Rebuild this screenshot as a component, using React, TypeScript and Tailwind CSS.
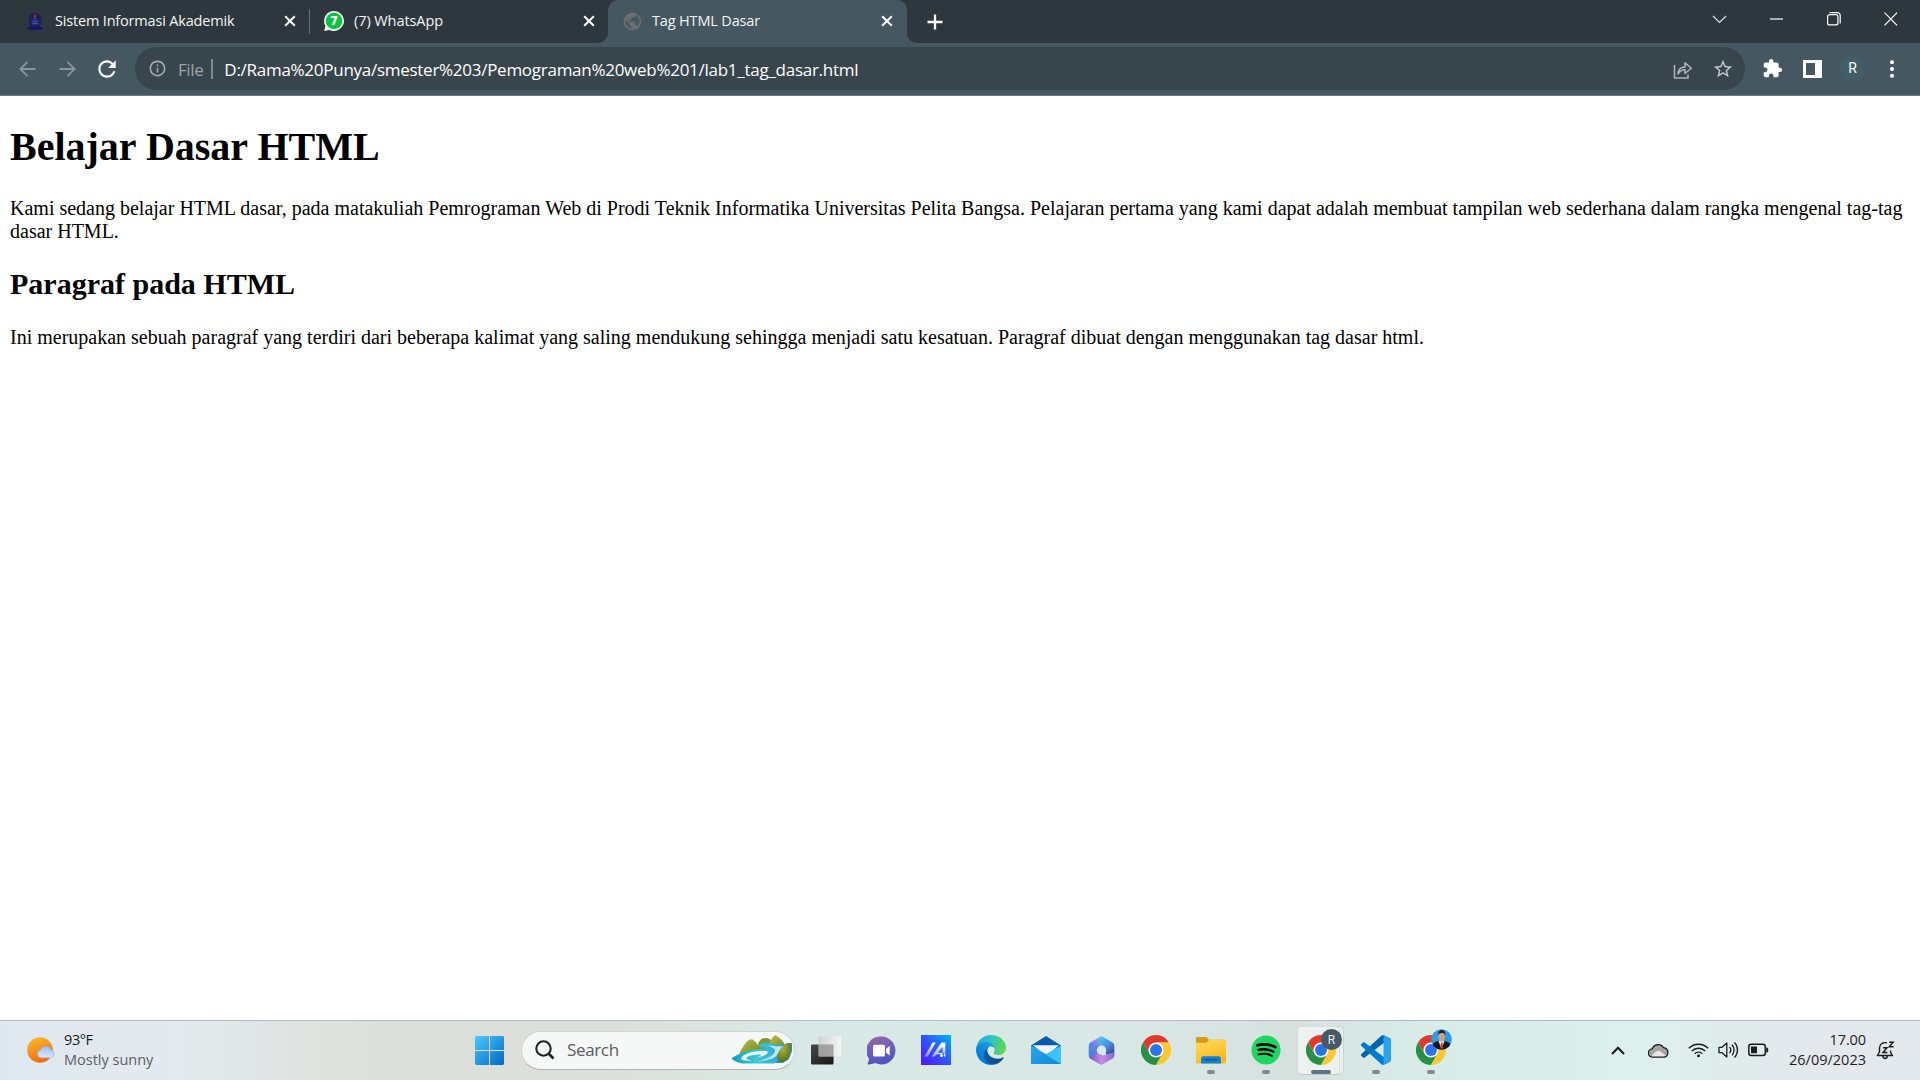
import React from "react";
import {
  MdExtension,
  MdInfoOutline,
  MdPublic,
  MdRefresh,
  MdStarBorder,
} from "react-icons/md";
import { FaSpotify } from "react-icons/fa";

/* ---------- Browser chrome ---------- */

function CloseGlyph() {
  return (
    <svg width="12" height="12" viewBox="0 0 12 12" fill="none" stroke="#fff" strokeWidth="2">
      <path d="M1.200 1.200 10.800 10.800M10.800 1.200 1.200 10.800" />
    </svg>
  );
}

function CampusIcon() {
  return (
    <svg width="18" height="18" viewBox="0 0 18 18">
      <path d="M9 1C4.500 1 2.500 4 2.500 8c0 3 .7 5 2 6.500h9c1.300-1.500 2-3.500 2-6.500 0-4-2-7-6.500-7z" fill="#1c2150" />
      <path d="M5.500 8 9 5.500 12.500 8v5h-7z" fill="#26307d" />
      <path d="M1.500 15.200h15v2.300h-15z" fill="#12106e" />
      <path d="M4 13.500h10v1.700H4z" fill="#1a1a66" />
      <path d="M9 2c1.300 1.700 1.300 3.300 0 4.500C7.700 5.300 7.700 3.700 9 2z" fill="#c22a2a" />
      <path d="M7.500 9.500h3M6.500 11.500h5" stroke="#5a64b8" strokeWidth=".7" />
    </svg>
  );
}

function WhatsAppIcon() {
  return (
    <span className="relative flex h-5 w-5 items-center justify-center">
      <svg className="absolute inset-0" width="20" height="20" viewBox="0 0 20 20">
        <path d="M10 0a10 10 0 1 1-4.600 18.900L.2 20l1.200-5A10 10 0 0 1 10 0z" fill="#f4f6f5" />
        <circle cx="10" cy="10" r="8.300" fill="#0dc143" />
      </svg>
      <span className="relative text-[12px] leading-none font-extrabold text-white">7</span>
    </span>
  );
}

function TabStrip() {
  return (
    <div className="flex h-[43px] items-stretch bg-[#2d373d] text-[14.5px] text-[#f3f5f6]">
      <div className="flex w-[309px] items-center pb-px pl-[26px]">
        <CampusIcon />
        <span className="ml-[11px] w-[229px] pb-px leading-5 tracking-[-0.18px]">Sistem Informasi Akademik</span>
        <CloseGlyph />
      </div>
      <div className="my-[9px] w-px bg-[#66727a]" />
      <div className="flex w-[298px] items-center pb-px pl-[14px]">
        <WhatsAppIcon />
        <span className="ml-[10px] w-[229px] pb-px leading-5 tracking-[-0.08px]">(7) WhatsApp</span>
        <CloseGlyph />
      </div>
      <div className="relative flex w-[299px] items-center rounded-t-[10px] bg-[#455760] pb-px pl-[14px]">
        <svg className="absolute bottom-0 -left-[10px]" width="10" height="10" viewBox="0 0 10 10">
          <path d="M10 0v10H0A10 10 0 0 0 10 0z" fill="#455760" />
        </svg>
        <svg className="absolute -right-[10px] bottom-0" width="10" height="10" viewBox="0 0 10 10">
          <path d="M0 0v10h10A10 10 0 0 1 0 0z" fill="#455760" />
        </svg>
        <MdPublic size={21} color="#6b6e71" />
        <span className="ml-[9px] w-[229px] pb-px leading-5 tracking-[-0.16px]">Tag HTML Dasar</span>
        <CloseGlyph />
      </div>
      <div className="flex items-center pl-5">
        <svg width="16" height="16" viewBox="0 0 16 16" stroke="#fff" strokeWidth="2.300">
          <path d="M8 .5v15M.5 8h15" />
        </svg>
      </div>
      <div className="ml-auto flex h-[37px] items-center">
        <svg className="w-[57px]" height="14" viewBox="0 0 57 14" fill="none" stroke="#dfe3e5" strokeWidth="1.200">
          <path d="M22 4l6.500 6.500L35 4" />
        </svg>
        <svg className="w-[57px]" height="14" viewBox="0 0 57 14" stroke="#fff" strokeWidth="1.200">
          <path d="M22 7h13" />
        </svg>
        <svg className="w-[57px]" height="14" viewBox="0 0 57 14" fill="none" stroke="#fff" strokeWidth="1.200">
          <rect x="22.600" y="2.600" width="10.300" height="10.300" rx="2" />
          <path d="M24.500 .7h8a2.700 2.700 0 0 1 2.700 2.700v8" />
        </svg>
        <svg className="w-[58px]" height="14" viewBox="0 0 58 14" stroke="#fff" strokeWidth="1.200">
          <path d="M22.500.7l12.600 12.600M35.100.7 22.500 13.300" />
        </svg>
      </div>
    </div>
  );
}

function Toolbar() {
  return (
    <div className="flex h-[53px] items-center border-b border-[#6a7983] bg-[#455760] pb-px text-[17px]">
      <div className="flex w-[135px] items-center pl-[19px]">
        <svg width="17" height="16" viewBox="0 0 17 16" fill="none" stroke="#89959b" strokeWidth="1.900">
          <path d="M16.500 8H1.500M8.500.9 1.400 8l7.100 7.100" />
        </svg>
        <svg className="ml-[23px]" width="17" height="16" viewBox="0 0 17 16" fill="none" stroke="#89959b" strokeWidth="1.900">
          <path d="M.5 8h15M8.500.9 15.600 8l-7.100 7.100" />
        </svg>
        <MdRefresh className="ml-[18px]" size={26} color="#fff" />
      </div>
      <div className="flex h-[43px] w-[1610px] items-center rounded-full bg-[#39454c] pl-[13px]">
        <MdInfoOutline size={19} color="#a3abb0" />
        <span className="ml-[11px] pt-[2px] tracking-[-0.4px] text-[#9ba3a8]">File</span>
        <span className="ml-[8px] h-5 w-[2px] bg-[#7e888e]" />
        <span className="ml-[11px] pt-[2px] tracking-[-0.27px] text-white">
          D:/Rama%20Punya/smester%203/Pemograman%20web%201/lab1_tag_dasar.html
        </span>
        <svg className="mt-[2px] ml-auto" width="20" height="18" viewBox="0 0 20 18" fill="none" stroke="#b0b5b8" strokeWidth="1.500">
          <path d="M1.500 4v13H15v-3.500" />
          <path d="M5 13c.4-4.600 3-7 7-7V1.800L18.300 7.200 12 12.500V8.800C9 8.800 6.800 10 5 13z" strokeLinejoin="round" />
        </svg>
        <MdStarBorder className="mt-px mr-[11px] ml-[19px]" size={22} color="#c3c7c9" />
      </div>
      <div className="flex items-center">
        <MdExtension className="ml-[17px]" size={21} color="#fff" />
        <svg className="ml-[20px]" width="19" height="18" viewBox="0 0 19 18">
          <path d="M0 0h19v18H0zM3 3v12h9V3z" fill="#fff" fillRule="evenodd" />
        </svg>
        <span className="ml-[17px] flex h-[27px] w-[27px] items-center justify-center rounded-full bg-[#425c68] font-[Roboto] text-[14px] text-white">
          R
        </span>
        <svg className="ml-[23px]" width="6" height="18" viewBox="0 0 6 18" fill="#fff">
          <circle cx="3" cy="2.300" r="2" />
          <circle cx="3" cy="9" r="2" />
          <circle cx="3" cy="15.700" r="2" />
        </svg>
      </div>
    </div>
  );
}

/* ---------- Page ---------- */

function PageContent() {
  return (
    <main className="flex-1 bg-white px-[10px] pt-[28px] font-['Liberation_Serif',serif] text-[20px] leading-[23px] text-black">
      <h1 className="text-[40px] leading-[46px] font-bold">Belajar Dasar HTML</h1>
      <p className="mt-[27px]">
        Kami sedang belajar HTML dasar, pada matakuliah Pemrograman Web di Prodi Teknik Informatika Universitas Pelita
        Bangsa. Pelajaran pertama yang kami dapat adalah membuat tampilan web sederhana dalam rangka mengenal tag-tag
        dasar HTML.
      </p>
      <h2 className="mt-[24px] text-[30px] leading-[34px] font-bold">Paragraf pada HTML</h2>
      <p className="mt-[25px]">
        Ini merupakan sebuah paragraf yang terdiri dari beberapa kalimat yang saling mendukung sehingga menjadi satu
        kesatuan. Paragraf dibuat dengan menggunakan tag dasar html.
      </p>
    </main>
  );
}

/* ---------- Taskbar ---------- */

function WeatherIcon() {
  return (
    <svg width="28" height="27" viewBox="0 0 28 27">
      <defs>
        <linearGradient id="sun" x1="0.200" y1="0" x2="0.600" y2="1">
          <stop offset="0" stopColor="#f7b92e" />
          <stop offset="1" stopColor="#f2680f" />
        </linearGradient>
        <linearGradient id="cloud" x1="0" y1="0" x2="0" y2="1">
          <stop offset="0" stopColor="#9dbdf2" />
          <stop offset="1" stopColor="#dbe7fb" />
        </linearGradient>
      </defs>
      <circle cx="13" cy="13" r="12.800" fill="url(#sun)" />
      <path d="M14 20.800a4 4 0 0 1-.3-7.900 5.300 5.300 0 0 1 10-.2 4.100 4.100 0 0 1-.2 8.100z" fill="url(#cloud)" stroke="#8fb0ea" strokeWidth=".6" />
    </svg>
  );
}

function WindowsIcon() {
  return (
    <svg width="29" height="29" viewBox="0 0 29 29">
      <defs>
        <linearGradient id="win" x1="0" y1="0" x2="1" y2="1">
          <stop offset="0" stopColor="#4cc9fb" />
          <stop offset="1" stopColor="#0067c9" />
        </linearGradient>
      </defs>
      <path d="M1 0h13v14H0V1zM15 0h13l1 1v13H15zM0 15h14v14H1l-1-1zM15 15h14v13l-1 1H15z" fill="url(#win)" />
    </svg>
  );
}

function RiverIcon() {
  return (
    <svg width="62" height="30" viewBox="0 0 62 30">
      <defs>
        <linearGradient id="hill" x1="0" y1="0" x2="1" y2="1">
          <stop offset="0" stopColor="#c0bb45" />
          <stop offset="0.500" stopColor="#93a336" />
          <stop offset="1" stopColor="#5f8424" />
        </linearGradient>
        <linearGradient id="river" x1="0" y1="0" x2="1" y2="0">
          <stop offset="0" stopColor="#0e9fc0" />
          <stop offset="0.450" stopColor="#3cc9cf" />
          <stop offset="1" stopColor="#2b9fe0" />
        </linearGradient>
        <radialGradient id="bush" cx="0.350" cy="0.250" r="0.800">
          <stop offset="0" stopColor="#b6b23c" />
          <stop offset="1" stopColor="#4f711c" />
        </radialGradient>
      </defs>
      <path d="M56 8h5v8l-3 8-6 4h-8z" fill="#1d93d2" />
      <path d="M26 13c1-6 4-10 8-10s6 2 8 4l4 6-6 5H27z" fill="#83962f" />
      <path d="M38 9c2-4 4-8 6.500-8.700C48 2 52 6 54 10l-5 7-10-3z" fill="url(#hill)" />
      <path d="M8 18.500C11 14 15 5 20 4.300c4 .3 7 6 9.500 10.200L21 20z" fill="url(#hill)" />
      <path d="M28 10c4-3.500 10-3 13-1 5 2.500 10-.5 14.500.5C52 13 49 15 49 19c0 4-1 7-6 9.500H12C7 28 2 25.500.5 23.500 5 20 14 15.500 25 14.500c4-.4 9 0 8.500-1.500-.4-1.300-5.500-.5-5.500-3z" fill="url(#river)" />
      <path d="M37 10.500c5-.5 8 1.500 15 .5-4 3-3 7-8 11-3 2-9 4-17 4.500 8-2.500 17-6 17-11 0-2-3-3-7-5z" fill="#b8e7f5" />
      <path d="M10 24c1-4.500 9-8 26-8 2.500 2.500-2 5-10 6.500 3-1.500 4-2.500 4-3.300-7 .2-15 1.800-14.500 4.300.3 1 3 1.500 5 2-5 .5-9.500 0-10.500-1.500z" fill="#e4f8fc" />
      <path d="M47 19c0-3 4-4 5-8 2-3 7-4 8-1 1 3-1 5-1 8 0 5-4 9-8 9s-6-4-4-8z" fill="url(#bush)" />
    </svg>
  );
}

function TaskViewIcon() {
  return (
    <svg width="30" height="29" viewBox="0 0 30 29">
      <defs>
        <linearGradient id="tvA" x1="0" y1="0" x2="1" y2="1">
          <stop offset="0" stopColor="#484848" />
          <stop offset="1" stopColor="#161616" />
        </linearGradient>
        <linearGradient id="tvB" x1="0" y1="0" x2="1" y2="0">
          <stop offset="0" stopColor="#cfcfcf" />
          <stop offset="1" stopColor="#f7f7f7" />
        </linearGradient>
      </defs>
      <rect y="8.500" width="22.500" height="20" rx="1" fill="url(#tvA)" />
      <rect x="7.500" y="0.500" width="22.500" height="20" rx="1" fill="url(#tvB)" opacity=".9" />
      <path d="M7.500 8.500h15v12h-15z" fill="#8d8d8d" opacity=".65" />
    </svg>
  );
}

function ChatIcon() {
  return (
    <svg width="29" height="29" viewBox="0 0 29 29">
      <defs>
        <linearGradient id="chat" x1="0" y1="0" x2="0.300" y2="1">
          <stop offset="0" stopColor="#a0679f" />
          <stop offset="0.450" stopColor="#7460b8" />
          <stop offset="1" stopColor="#5055c4" />
        </linearGradient>
      </defs>
      <path d="M14.500.5a14 14 0 1 1-6.200 26.600C6 28.200 3 28.700 1 28.500c-.6 0-.7-.6-.4-1 1-1.600 1.200-3.500 1.300-5A14 14 0 0 1 14.500.5z" fill="url(#chat)" />
      <rect x="6" y="8.800" width="12" height="11.800" rx="1.500" fill="#fff" />
      <path d="M19 13l3.700-3.200v9.800L19 16.400z" fill="#fff" />
    </svg>
  );
}

function MyAsusIcon() {
  return (
    <svg width="30" height="30" viewBox="0 0 30 30">
      <defs>
        <linearGradient id="asus" x1="0" y1="1" x2="1" y2="0">
          <stop offset="0" stopColor="#5b12fb" />
          <stop offset="0.500" stopColor="#2c55fb" />
          <stop offset="1" stopColor="#00b4fb" />
        </linearGradient>
        <linearGradient id="asusMark" x1="0" y1="1" x2="0.300" y2="0">
          <stop offset="0" stopColor="#7f8cff" />
          <stop offset="1" stopColor="#fff" />
        </linearGradient>
      </defs>
      <path d="M0 0h30v30H0z" fill="url(#asus)" />
      <path d="M3.500 21.500 11.500 7.500h3.300l-8 14zM10.500 21.500 20.500 7.500h3.800v11l-2.800-1v-5.500l-7.700 9.500z" fill="url(#asusMark)" />
      <path d="M14.500 18.500h7" stroke="#c9d4ff" strokeWidth="1.500" />
      <circle cx="20.500" cy="20.500" r="1.500" fill="#fff" />
      <path d="M22.800 18.500h1.500v3h-1.500z" fill="#dfe6ff" />
    </svg>
  );
}

function EdgeIcon() {
  return (
    <svg width="30" height="30" viewBox="0 0 256 256">
      <defs>
        <linearGradient id="edgeA" x1="0.200" y1="0.500" x2="1" y2="0.600">
          <stop offset="0" stopColor="#0c59a4" />
          <stop offset="1" stopColor="#114a8b" />
        </linearGradient>
        <linearGradient id="edgeB" x1="0.800" y1="0.100" x2="0.300" y2="1">
          <stop offset="0" stopColor="#1b9de2" />
          <stop offset="0.600" stopColor="#0883d8" />
          <stop offset="1" stopColor="#0078d4" />
        </linearGradient>
        <linearGradient id="edgeC" x1="0" y1="0.300" x2="1" y2="0.500">
          <stop offset="0" stopColor="#2aa8e0" />
          <stop offset="0.450" stopColor="#2fc2c8" />
          <stop offset="1" stopColor="#5fd94e" />
        </linearGradient>
      </defs>
      <g transform="translate(-4.63 -4.92)">
        <path d="M235.680 195.460a93.730 93.730 0 0 1-10.540 4.710 101.870 101.870 0 0 1-35.900 6.460c-47.320 0-88.540-32.550-88.540-74.320A31.480 31.480 0 0 1 117.130 105c-42.800 1.800-53.800 46.400-53.800 72.530 0 73.880 68.090 81.370 82.760 81.370 7.910 0 19.840-2.300 27-4.560l1.310-.44a128.340 128.340 0 0 0 66.600-52.800 4 4 0 0 0-5.320-5.640z" fill="url(#edgeA)" />
        <path d="M110.340 246.340A79.200 79.200 0 0 1 87.600 225a80.720 80.720 0 0 1 29.530-120c3.120-1.470 8.450-4.130 15.540-4a32.350 32.350 0 0 1 25.690 13 31.880 31.880 0 0 1 6.360 18.660c0-.21 24.460-79.600-80-79.600-43.900 0-80 41.660-80 78.210a130.150 130.150 0 0 0 12.110 56 128 128 0 0 0 156.380 67.110 75.550 75.550 0 0 1-62.780-8z" fill="url(#edgeB)" />
        <path d="M156.940 153.780c-.81 1.050-3.300 2.500-3.300 5.660 0 2.610 1.700 5.120 4.720 7.230 14.380 10 41.490 8.680 41.560 8.680a59.560 59.560 0 0 0 30.270-8.350A61.380 61.380 0 0 0 260.620 114c.26-22.410-8-37.310-11.340-43.910C228.090 28.760 182.350 5 132.620 5a128 128 0 0 0-128 126.200c.48-36.540 36.800-66.050 80-66.050 3.500 0 23.460.34 42 10.070 16.340 8.580 24.900 18.940 30.850 29.210 6.180 10.670 7.280 24.150 7.280 29.520s-2.740 13.330-7.810 19.830z" fill="url(#edgeC)" />
      </g>
    </svg>
  );
}

function MailIcon() {
  return (
    <svg width="30" height="28" viewBox="0 0 30 28">
      <defs>
        <linearGradient id="mail" x1="0" y1="0" x2="1" y2="1">
          <stop offset="0" stopColor="#2aa9ea" />
          <stop offset="1" stopColor="#1288d8" />
        </linearGradient>
      </defs>
      <path d="M0 9.500 15 0l15 9.500v5H0z" fill="#0a5ca8" />
      <path d="M2 9.200h26L15 20z" fill="#f4f4f8" />
      <path d="M0 9.500 15 18 30 9.500V28H0z" fill="#3bc4f5" />
      <path d="M0 9.500 30 28H0z" fill="url(#mail)" />
    </svg>
  );
}

function Office365Icon() {
  return (
    <svg width="27" height="29" viewBox="0 0 27 29">
      <defs>
        <clipPath id="offHex">
          <path d="M11.500 1.200q2-1.200 4 0l8.800 5Q26.300 7.400 26.300 9.700v9.600q0 2.300-2 3.500l-8.800 5q-2 1.200-4 0l-8.800-5q-2-1.200-2-3.500V9.700q0-2.300 2-3.500z" />
        </clipPath>
        <linearGradient id="offA" x1="0.600" y1="0" x2="0.300" y2="1">
          <stop offset="0" stopColor="#b18fe8" />
          <stop offset="0.400" stopColor="#5a86e0" />
          <stop offset="1" stopColor="#3a7be0" />
        </linearGradient>
        <linearGradient id="offB" x1="0.200" y1="0" x2="0.800" y2="1">
          <stop offset="0" stopColor="#45cdf5" />
          <stop offset="0.450" stopColor="#4a8be0" />
          <stop offset="1" stopColor="#2c2f7c" />
        </linearGradient>
        <linearGradient id="offC" x1="0" y1="0" x2="1" y2="0">
          <stop offset="0" stopColor="#6a4fb4" />
          <stop offset="0.500" stopColor="#c98ce6" />
          <stop offset="1" stopColor="#8468d0" />
        </linearGradient>
      </defs>
      <g clipPath="url(#offHex)">
        <path d="M0 0h14v29H0z" fill="url(#offA)" />
        <path d="M12 0h15v24l-9-5.500L17 11 9.500 7z" fill="url(#offB)" />
        <path d="M0 21.500 9.500 17l4 3L27 16v13H0z" fill="url(#offC)" />
      </g>
      <circle cx="13.500" cy="14.300" r="4.700" fill="#d9e9e5" />
    </svg>
  );
}

function ChromeIcon() {
  return (
    <svg width="30" height="30" viewBox="0 0 48 48">
      <circle cx="24" cy="24" r="12" fill="#fff" />
      <path d="M24 12h20.781A23.994 23.994 0 0 0 3.216 12.003L13.608 30l.009-.002A11.985 11.985 0 0 1 24 12z" fill="#e03a2f" />
      <path d="M13.609 30.003 3.218 12.006A23.994 23.994 0 0 0 24.003 48l10.390-17.997-.007-.007a11.985 11.985 0 0 1-20.777.007z" fill="#269045" />
      <path d="M34.391 30.003 24.001 48A23.994 23.994 0 0 0 44.780 12.003H23.999l-.003.010a11.985 11.985 0 0 1 10.395 17.990z" fill="#fcc934" />
      <circle cx="24" cy="24" r="9.500" fill="#2b73e8" />
    </svg>
  );
}

function FolderIcon() {
  return (
    <svg width="30" height="27" viewBox="0 0 30 27">
      <defs>
        <linearGradient id="fold" x1="0" y1="0" x2="0.500" y2="1">
          <stop offset="0" stopColor="#ffdb63" />
          <stop offset="1" stopColor="#fbb81a" />
        </linearGradient>
      </defs>
      <path d="M0 1.500C0 .7.700 0 1.500 0h9L13 2.700h15.500c.8 0 1.500.5 1.500 1.300v8H0z" fill="#dc9a12" />
      <path d="M0 5.800h10.500L13 3h16c.6 0 1 .4 1 1v21.500c0 .6-.4 1-1 1H1c-.6 0-1-.4-1-1z" fill="url(#fold)" />
      <path d="M5 26.500v-5c0-1.300 1-2.300 2.300-2.300h15.400c1.300 0 2.300 1 2.300 2.300v5z" fill="#1181d3" />
      <path d="M8.500 22.700h13" stroke="#0a5296" strokeWidth="1.300" />
    </svg>
  );
}

function SpotifyIcon() {
  return (
    <span className="flex h-[30px] w-[30px] items-center justify-center rounded-full bg-[radial-gradient(circle,#000_60%,transparent_61%)]">
      <FaSpotify size={30} color="#1ed760" />
    </span>
  );
}

function CodeIcon() {
  return (
    <svg width="30" height="30" viewBox="0 0 100 100">
      <path d="M96.460 10.800 75.860.870a6.230 6.230 0 0 0-7.110 1.210L1.300 63.580a4.170 4.170 0 0 0 0 6.170l5.510 5a4.170 4.170 0 0 0 5.320.24L93.360 13.380A4.140 4.140 0 0 1 100 16.670v-.24a6.250 6.250 0 0 0-3.540-5.630z" fill="#0065a9" />
      <path transform="translate(0 100) scale(1 -1)" d="M96.460 10.800 75.860.870a6.230 6.230 0 0 0-7.110 1.210L1.300 63.580a4.170 4.170 0 0 0 0 6.170l5.510 5a4.170 4.170 0 0 0 5.320.24L93.360 13.380A4.140 4.140 0 0 1 100 16.670v-.24a6.250 6.250 0 0 0-3.540-5.630z" fill="#007acc" />
      <path d="M75.860 99.130a6.230 6.230 0 0 1-7.110-1.210A3.660 3.660 0 0 0 75 95.330V4.670a3.660 3.660 0 0 0-6.250-2.590A6.230 6.230 0 0 1 75.860.870l20.600 9.900A6.250 6.250 0 0 1 100 16.400v67.200a6.250 6.250 0 0 1-3.540 5.630z" fill="#28a2ee" />
    </svg>
  );
}

function PortraitBadge() {
  return (
    <svg className="absolute -top-[6px] left-[15px]" width="21" height="21" viewBox="0 0 21 21">
      <defs>
        <clipPath id="face">
          <circle cx="10.500" cy="10.500" r="10.300" />
        </clipPath>
      </defs>
      <g clipPath="url(#face)">
        <path d="M0 0h21v21H0z" fill="#2d9be0" />
        <path d="M0 21c0-6 3-8 7-9h7c4 1 7 3 7 9z" fill="#15171c" />
        <path d="M7.500 12h6l-3 8z" fill="#f0ece8" />
        <path d="M10 13.500h1.300l.8 5-1.500 2-1.300-2z" fill="#c23a28" />
        <ellipse cx="10.600" cy="7.800" rx="3.300" ry="5" fill="#caa38b" />
        <path d="M7.100 6.500C7 2.500 8.500 1 10.700 1s3.900 1.500 3.600 5.300c-.8-2-1.500-2.400-3.600-2.400s-2.900.6-3.600 2.600z" fill="#252021" />
      </g>
    </svg>
  );
}

function Slot({ children, mark }: { children: React.ReactNode; mark?: "dot" | "bar" }) {
  return (
    <div className="relative flex h-[58px] w-[55px] items-center justify-center">
      {mark === "bar" && (
        <>
          <span className="absolute top-[5px] left-[8px] h-[49px] w-[42px] rounded-[5px] border border-[#c9d0ce] bg-[#e9f0ee]" />
          <span className="absolute top-[5px] left-[3px] h-[49px] w-[43px] rounded-[5px] border border-[#d5dcda] border-b-[#bfc6c4] bg-[#edf2f0]" />
        </>
      )}
      <div className="relative">{children}</div>
      {mark === "dot" && <span className="absolute top-[49px] left-[23.500px] h-1 w-2 rounded-full bg-[#82898a]" />}
      {mark === "bar" && <span className="absolute top-[49px] left-[17.500px] h-1 w-5 rounded-full bg-[#5f7488]" />}
    </div>
  );
}

function Tray() {
  return (
    <div className="ml-auto flex items-center">
      <svg width="14" height="9" viewBox="0 0 14 9" fill="none" stroke="#1c1c1c" strokeWidth="2">
        <path d="M1 8l6-6.300L13 8" />
      </svg>
      <svg className="ml-[23px]" width="21" height="15" viewBox="0 0 21 15">
        <path d="M5 14.200a4.200 4.200 0 0 1-.7-8.400 6.300 6.300 0 0 1 11.200-1.200 4.900 4.900 0 0 1 .7 9.600z" fill="#a5a5a5" />
        <path d="M3.500 14 C5 10 8 8 11 7.500L18.500 13c-.8.800-1.500 1.200-2.500 1.200z" fill="#e8e8e8" />
        <path d="M5 14.200a4.200 4.200 0 0 1-.7-8.400 6.300 6.300 0 0 1 11.200-1.200 4.900 4.900 0 0 1 .7 9.600z" fill="none" stroke="#222" strokeWidth="1.300" />
      </svg>
      <svg className="ml-[19px]" width="21" height="16" viewBox="0 0 21 16" fill="none" stroke="#1c1c1c" strokeWidth="1.400">
        <path d="M.8 6.300a13.700 13.700 0 0 1 19.400 0M3.800 9a9.500 9.500 0 0 1 13.400 0M6.700 11.700a5.400 5.400 0 0 1 7.600 0" />
        <circle cx="10.500" cy="13.700" r="1.500" fill="#1c1c1c" stroke="none" />
      </svg>
      <svg className="ml-[9px]" width="21" height="18" viewBox="0 0 21 18" fill="none" stroke="#1c1c1c" strokeWidth="1.300">
        <path d="M1 6.300h3L8.800 2v14L4 11.700H1z" strokeLinejoin="round" />
        <path d="M11.500 6a4.500 4.500 0 0 1 0 6M14 3.700a8 8 0 0 1 0 10.600M16.500 1.400a11.200 11.200 0 0 1 0 15.200" />
      </svg>
      <svg className="ml-[9px]" width="21" height="14" viewBox="0 0 21 14">
        <rect x=".8" y="1.300" width="16.500" height="11.200" rx="2.500" fill="none" stroke="#1c1c1c" strokeWidth="1.500" />
        <path d="M3 3.600h6v6.600H3zM18.200 4.500h1l1 1.200v2.600l-1 1.200h-1z" fill="#1c1c1c" />
      </svg>
      <div className="ml-[10px] w-[87px] pb-px text-right text-[14.5px] leading-5 text-[#1f1f1f]">
        <div className="tracking-[-0.1px]">17.00</div>
        <div>26/09/2023</div>
      </div>
      <svg className="mr-[25px] ml-[10px]" width="19" height="19" viewBox="0 0 19 19" fill="none" stroke="#1c1c1c" strokeWidth="1.400">
        <path d="M11 1.900C6.500.8 3.500 3.500 3.500 7v4L1.300 14.500h15.200L14.600 11.500V9.500" strokeLinejoin="round" />
        <path d="M6.700 15c.4 1.600 1.300 2.500 2.400 2.500s2-.9 2.400-2.500M7 6.800h4l-4 4.700h4.300M13.200 1.200h4l-4 4.500h4.300" />
      </svg>
    </div>
  );
}

function Taskbar() {
  return (
    <footer className="flex h-[60px] items-center border-t border-[#b3b9bc] bg-[linear-gradient(90deg,#dfe7f0_0px,#e3ebee_180px,#dfe3e1_300px,#dbdfd9_420px,#dcdfda_600px,#d9e9e5_800px,#d9e8e5_1150px,#d6e1de_1290px,#d9ebe7_1400px,#ddf0ed_1640px,#e3e9ec_1800px,#e2e8ec_1920px)] pb-px">
      <div className="flex w-[475px] items-center pl-[27px]">
        <WeatherIcon />
        <div className="ml-[9px] pb-px text-[14.5px] leading-5">
          <div className="tracking-[-0.4px] text-[#1b1b1b]">93°F</div>
          <div className="text-[#5b6062]">Mostly sunny</div>
        </div>
      </div>
      <WindowsIcon />
      <div className="ml-[17px] flex h-[39px] w-[274px] items-center rounded-full border border-[#cfd5d3] border-b-[#aeb5b2] bg-[#f6f8f7] pl-[13px]">
        <svg width="20" height="20" viewBox="0 0 20 20" fill="none" stroke="#222" strokeWidth="2.100">
          <circle cx="8.500" cy="8.500" r="7.200" />
          <path d="M13.500 13.500l5 5" strokeWidth="2.600" />
        </svg>
        <span className="ml-[12px] text-[17px] tracking-[-0.35px] text-[#5c5c5c]">Search</span>
        <span className="mr-[1px] ml-auto">
          <RiverIcon />
        </span>
      </div>
      <div className="ml-[3.500px] flex">
        <Slot><TaskViewIcon /></Slot>
        <Slot><ChatIcon /></Slot>
        <Slot><MyAsusIcon /></Slot>
        <Slot><EdgeIcon /></Slot>
        <Slot><MailIcon /></Slot>
        <Slot><Office365Icon /></Slot>
        <Slot><ChromeIcon /></Slot>
        <Slot mark="dot"><FolderIcon /></Slot>
        <Slot mark="dot"><SpotifyIcon /></Slot>
        <Slot mark="bar">
          <ChromeIcon />
          <span className="absolute -top-[6px] left-[15px] flex h-[21px] w-[21px] items-center justify-center rounded-full bg-[#455a64] font-[Roboto] text-[12px] text-[#e8ecee]">
            R
          </span>
        </Slot>
        <Slot mark="dot"><CodeIcon /></Slot>
        <Slot mark="dot">
          <ChromeIcon />
          <PortraitBadge />
        </Slot>
      </div>
      <Tray />
    </footer>
  );
}

export default function App() {
  return (
    <div className="flex h-[1080px] w-[1920px] flex-col overflow-hidden whitespace-normal font-['Open_Sans',sans-serif]">
      <TabStrip />
      <Toolbar />
      <PageContent />
      <Taskbar />
    </div>
  );
}
